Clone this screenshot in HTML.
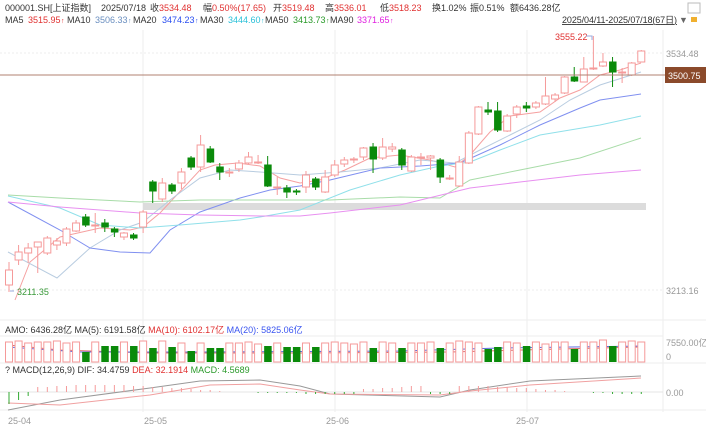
<!DOCTYPE html>
<html><head><meta charset="utf-8">
<style>
body{margin:0;width:706px;height:430px;overflow:hidden;background:#fff;font-family:"Liberation Sans","Noto Sans CJK SC",sans-serif;}
svg{position:absolute;left:0;top:0}
text{font-family:"Liberation Sans","Noto Sans CJK SC",sans-serif;font-size:9px}
</style></head><body>
<svg id="s" width="706" height="430" xmlns="http://www.w3.org/2000/svg">
<g stroke="#eee" stroke-width="1">
<line x1="143" y1="30" x2="143" y2="412"/><line x1="335" y1="30" x2="335" y2="412"/><line x1="527" y1="30" x2="527" y2="412"/>
<line x1="663" y1="30" x2="663" y2="412"/>
<line x1="0" y1="53" x2="663" y2="53" stroke-dasharray="2,2"/>
<line x1="0" y1="290" x2="663" y2="290" stroke-dasharray="2,2"/>
<line x1="0" y1="320" x2="706" y2="320"/>
<line x1="0" y1="336" x2="663" y2="336"/>
<line x1="0" y1="363" x2="706" y2="363"/>
<line x1="0" y1="392" x2="663" y2="392" stroke="#e4e4e4"/>
<line x1="0" y1="410" x2="706" y2="410"/>
</g>
<rect x="143" y="203" width="503" height="7" fill="#dcdcdc"/>
<g id="ma" fill="none" stroke-width="1"></g>
<g id="cd"></g>
<line x1="0" y1="75" x2="665" y2="75" stroke="#b08070" stroke-width="1"/>
<rect x="665" y="67" width="41" height="16" fill="#8b4a2b"/>
<text x="668" y="79" fill="#fff" font-size="9.5">3500.75</text>
<text x="666" y="57" fill="#999" font-size="9.5">3534.48</text>
<text x="666" y="294" fill="#999" font-size="9.5">3213.16</text>
<text x="555" y="40" fill="#e03030" font-size="9.5">3555.22</text>
<polyline points="586,36 592,36 592,40" fill="none" stroke="#9ad" stroke-width="1"/>
<text x="17" y="295" fill="#3a9a3a" font-size="9.5">3211.35</text>
<polyline points="14,291 10,291" stroke="#9ad"/>
<text y="11" fill="#333"><tspan x="5">000001.SH[上证指数]</tspan><tspan x="101">2025/07/18</tspan><tspan x="150">收</tspan><tspan fill="#e03030">3534.48</tspan><tspan x="203">幅</tspan><tspan fill="#e03030">0.50%(17.65)</tspan><tspan x="273">开</tspan><tspan fill="#e03030">3519.48</tspan><tspan x="325">高</tspan><tspan fill="#e03030">3536.01</tspan><tspan x="380">低</tspan><tspan fill="#e03030">3518.23</tspan><tspan x="432">换1.02%</tspan><tspan x="470">振0.51%</tspan><tspan x="510">额6436.28亿</tspan></text>
<text y="23" fill="#333"><tspan x="5">MA5</tspan><tspan x="28" fill="#e03030">3515.95</tspan><tspan x="61" fill="#e03030" font-size="7">↑</tspan><tspan x="67">MA10</tspan><tspan x="95" fill="#6a8fc0">3506.33</tspan><tspan x="128" fill="#6a8fc0" font-size="7">↑</tspan><tspan x="133">MA20</tspan><tspan x="162" fill="#2a4ef0">3474.23</tspan><tspan x="195" fill="#2a4ef0" font-size="7">↑</tspan><tspan x="200">MA30</tspan><tspan x="228" fill="#2ac0d8">3444.60</tspan><tspan x="261" fill="#2ac0d8" font-size="7">↑</tspan><tspan x="265">MA50</tspan><tspan x="293" fill="#2a9a2a">3413.73</tspan><tspan x="326" fill="#2a9a2a" font-size="7">↑</tspan><tspan x="330">MA90</tspan><tspan x="357" fill="#e020e0">3371.65</tspan><tspan x="390" fill="#e020e0" font-size="7">↑</tspan></text>
<text x="562" y="23" fill="#333" text-decoration="underline" textLength="115">2025/04/11-2025/07/18(67日)</text>
<text x="679" y="23" fill="#666" font-size="8">▼</text>
<rect x="691" y="17" width="6" height="5" fill="#f0b030"/>
<rect x="688" y="3" width="12" height="10" fill="none" stroke="#bbb"/>
<text x="5" y="333" fill="#333">AMO: 6436.28亿 MA(5): 6191.58亿 <tspan fill="#e03030">MA(10): 6102.17亿</tspan> <tspan fill="#3a55f0">MA(20): 5825.06亿</tspan></text>
<text x="666" y="346" fill="#999" font-size="9.5">7550.00亿</text>
<text x="666" y="360" fill="#999" font-size="9.5">0</text>
<text x="5" y="373" fill="#333">? MACD(12,26,9) DIF: 34.4759 <tspan fill="#e03030">DEA: 32.1914</tspan> <tspan fill="#2a9a2a">MACD: 4.5689</tspan></text>
<text x="666" y="396" fill="#999" font-size="9.5">0.00</text>
<g fill="#999" font-size="9.5"><text x="8" y="424">25-04</text><text x="144" y="424">25-05</text><text x="326" y="424">25-06</text><text x="516" y="424">25-07</text></g>
</svg>
<script>
var c=[[285,270,262,292],[260,252,245,265],[253,248,243,263],[247,242,242,273],[253,238,236,255],[245,241,238,250],[243,229,227,246],[231,223,220,232],[217,225,214,227],[226,225,213,233],[223,227,219,232],[229,232,227,237],[237,233,232,240],[235,238,233,240],[227,212,210,233],[182,191,180,203],[199,183,178,202],[185,191,183,194],[183,172,168,189],[158,167,156,170],[167,145,135,172],[149,162,146,163],[167,172,163,180],[173,172,168,177],[169,163,160,172],[163,157,152,164],[162,162,155,164],[165,186,156,187],[187,187,177,195],[188,192,185,198],[191,192,189,195],[187,175,171,193],[179,187,177,190],[192,177,170,193],[175,165,160,177],[164,160,157,167],[159,159,157,163],[157,148,147,160],[147,159,143,173],[158,147,138,160],[149,147,143,152],[150,165,148,170],[171,157,155,172],[157,157,153,165],[158,156,155,170],[160,177,158,183],[178,178,175,180],[186,162,156,187],[163,133,131,164],[134,107,106,135],[110,112,102,115],[111,130,102,132],[131,116,114,132],[114,107,105,118],[106,108,102,112],[107,103,101,109],[104,96,77,105],[99,95,93,102],[93,77,76,94],[77,81,67,82],[82,69,57,82],[68,68,36,70],[66,62,53,67],[62,72,57,87],[73,72,68,83],[75,63,62,76],[62,51,50,62]];
var R='#f59a9a',G='#0a8a0a',h='',v='',m='';
var vol=[20,21,19,20,20,21,19,20,14,20,20,20,20,20,21,18,21,19,19,15,19,18,18,19,19,20,18,20,19,19,19,19,19,19,20,19,18,20,18,20,19,18,19,19,20,18,19,21,20,19,17,19,20,19,20,20,18,20,20,17,20,20,22,20,20,21,20];
for(var i=0;i<67;i++){var x=9+i*9.58,d=c[i],up=d[1]<=d[0],col=up?R:G,t=Math.min(d[0],d[1]),b=Math.max(d[0],d[1]);if(b-t<1)b=t+1;
h+='<line x1="'+x+'" y1="'+d[2]+'" x2="'+x+'" y2="'+t+'" stroke="'+col+'"/><line x1="'+x+'" y1="'+b+'" x2="'+x+'" y2="'+d[3]+'" stroke="'+col+'"/>';
h+=up?'<rect x="'+(x-3.5)+'" y="'+t+'" width="7" height="'+(b-t)+'" fill="#fff" stroke="'+R+'"/>':'<rect x="'+(x-3.5)+'" y="'+(t-0.5)+'" width="7.5" height="'+(b-t+1)+'" fill="'+G+'"/>';
var vh=up?vol[i]:vol[i]-4;
v+=up?'<rect x="'+(x-3.5)+'" y="'+(362-vh)+'" width="7" height="'+vh+'" fill="#fff" stroke="'+R+'"/>':'<rect x="'+(x-3.5)+'" y="'+(362-vh)+'" width="7.5" height="'+vh+'" fill="'+G+'"/>';
var mh=Math.round(4*Math.sin(i/6))+(i<45?3:2);if(i<3)mh=-12+i*4;if(i>=31&&i<37)mh=-2;if(i>=44&&i<47)mh=-2;
v+='<line x1="'+x+'" y1="392" x2="'+x+'" y2="'+(392-mh)+'" stroke="'+(mh>=0?R:'#3a3')+'"/>';}
function pl(p,col){return '<polyline points="'+p+'" stroke="'+col+'" fill="none"/>'}
m+=pl('15,300 30,262 60,237 100,228 130,230 143,227 160,213 200,170 215,165 238,163 260,166 280,178 300,183 320,180 345,170 370,158 400,155 430,160 455,167 470,155 490,132 510,116 540,112 560,98 580,90 600,75 620,70 641,63','#f5a0a0');
m+=pl('8,252 57,278 90,248 120,230 143,222 170,200 200,178 230,170 260,172 300,175 340,172 380,168 420,160 455,163 480,150 510,135 540,120 570,100 600,85 641,72','#b8cce0');
m+=pl('8,202 60,230 90,248 120,252 150,253 170,230 200,212 240,198 270,190 300,186 330,180 380,168 420,166 460,163 500,145 540,125 580,108 600,100 641,94','#8090f0');
m+=pl('8,196 60,208 100,225 140,228 180,225 240,220 260,217 300,210 350,190 400,175 440,166 470,162 500,150 540,135 600,125 641,116','#90e0ea');
m+=pl('8,195 60,198 140,202 200,200 260,200 330,200 400,197 440,198 470,180 520,170 580,158 641,138','#a8dca8');
m+=pl('8,202 60,207 140,213 200,215 260,216 300,216 330,213 400,205 470,188 520,182 580,175 641,170','#e890f0');
m+=pl('8,345 60,350 150,353 300,353 450,352 560,349 641,347','#e07070')+pl('8,347 80,352 200,352 400,351 500,348 641,346','#6070e0');
m+=pl('8,410 60,400 150,388 200,381 260,380 300,386 330,394 440,397 470,390 530,381 641,376','#999');
m+=pl('8,403 60,405 150,395 210,385 260,384 300,390 330,394 440,395 470,391 530,385 641,378','#f0a0a0');
document.getElementById('cd').innerHTML=h+v;document.getElementById('ma').innerHTML=m;
</script>
</body></html>
